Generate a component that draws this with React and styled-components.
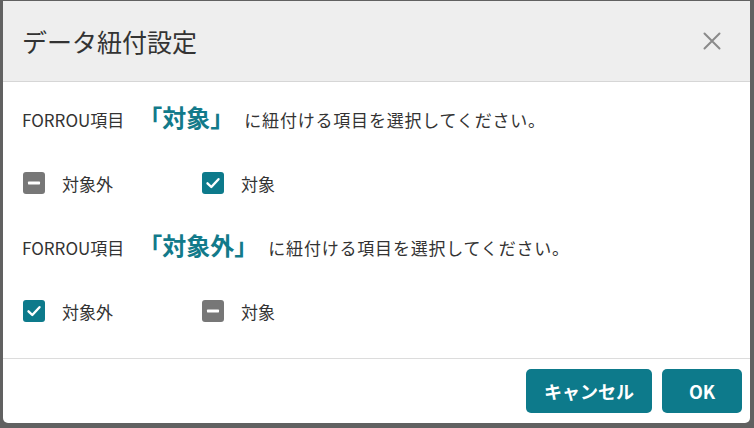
import React from 'react'
import styled, { createGlobalStyle } from 'styled-components'

const GlobalStyle = createGlobalStyle`
  html, body {
    margin: 0;
    padding: 0;
    background: #616161;
  }
  body {
    font-family: "Noto Sans CJK JP", "Noto Sans", sans-serif;
    color: #333;
  }
`

const Backdrop = styled.div`
  width: 754px;
  height: 428px;
  overflow: hidden;
  padding: 1px 0 0 3px;
  box-sizing: border-box;
`

const Dialog = styled.div`
  width: 747px;
  height: 422px;
  background: #fff;
  border-radius: 0 0 5px 5px;
  display: flex;
  flex-direction: column;
  overflow: hidden;
`

const Header = styled.div`
  height: 80px;
  flex-shrink: 0;
  background: #eeeeee;
  border-bottom: 1px solid #d6d6d6;
  display: flex;
  align-items: center;
  justify-content: space-between;
  padding: 0 28px 0 19px;
`

const Title = styled.h2`
  margin: 0;
  font-size: 25px;
  font-weight: 400;
  color: #333;
`

const CloseButton = styled.button`
  border: none;
  background: none;
  padding: 0;
  width: 20px;
  height: 20px;
  display: flex;
  align-items: center;
  justify-content: center;
  cursor: pointer;
`

const Body = styled.div`
  flex: 1;
  padding: 19px 19px 0;
  display: flex;
  flex-direction: column;
  gap: 35px;
`

const Section = styled.div`
  display: flex;
  flex-direction: column;
  gap: 39px;
`

const Prompt = styled.div`
  height: 32px;
  line-height: 32px;
  font-size: 17px;
  color: #333;
  white-space: nowrap;
`

const Target = styled.span`
  font-size: 24px;
  font-weight: 700;
  color: #127a8a;
  margin: 0 10px 0 14px;
`

const Rest = styled.span`
  letter-spacing: 0.8px;
`

const CheckRow = styled.div`
  display: flex;
  align-items: center;
  height: 22px;
`

const CheckItem = styled.label`
  display: flex;
  align-items: center;
  gap: 17px;
  width: 178px;
  font-size: 17px;
  color: #333;
  padding-left: 1px;
`

const Box = styled.span`
  width: 22px;
  height: 22px;
  border-radius: 3px;
  background: ${(p) => (p.$checked ? '#0d7a8b' : '#777777')};
  display: flex;
  align-items: center;
  justify-content: center;
  flex-shrink: 0;
`

const Footer = styled.div`
  height: 64px;
  flex-shrink: 0;
  border-top: 1px solid #dcdcdc;
  display: flex;
  align-items: center;
  justify-content: flex-end;
  gap: 10px;
  padding: 0 8px 0 0;
`

const Button = styled.button`
  height: 44px;
  min-width: 80px;
  padding: 0 18px;
  border: none;
  border-radius: 5px;
  background: #0d7a8b;
  color: #fff;
  font-family: "Noto Sans CJK JP", "Noto Sans", sans-serif;
  font-size: 18px;
  font-weight: 700;
  cursor: pointer;
`

const CheckIcon = ({ checked }) => (
  <Box $checked={checked}>
    {checked ? (
      <svg width="16" height="16" viewBox="0 0 16 16">
        <path d="M2.5 8.3 L6.3 12 L13.5 4.2" fill="none" stroke="#fff" strokeWidth="2.4" strokeLinecap="round" strokeLinejoin="round" />
      </svg>
    ) : (
      <svg width="16" height="16" viewBox="0 0 16 16">
        <rect x="2" y="6.6" width="12" height="2.8" rx="0.6" fill="#fff" />
      </svg>
    )}
  </Box>
)

const sections = [
  { target: '対象', options: [{ label: '対象外', checked: false }, { label: '対象', checked: true }] },
  { target: '対象外', options: [{ label: '対象外', checked: true }, { label: '対象', checked: false }] },
]

export default function App() {
  return (
    <>
      <GlobalStyle />
      <Backdrop>
        <Dialog>
          <Header>
            <Title>データ紐付設定</Title>
            <CloseButton aria-label="閉じる">
              <svg width="18" height="18" viewBox="0 0 18 18">
                <path d="M1.5 1.5 L16.5 16.5 M16.5 1.5 L1.5 16.5" stroke="#8a8a8a" strokeWidth="2" strokeLinecap="round" />
              </svg>
            </CloseButton>
          </Header>
          <Body>
            {sections.map((s) => (
              <Section key={s.target}>
                <Prompt>
                  FORROU項目
                  <Target>「{s.target}」</Target>
                  <Rest>に紐付ける項目を選択してください。</Rest>
                </Prompt>
                <CheckRow>
                  {s.options.map((o) => (
                    <CheckItem key={o.label}>
                      <CheckIcon checked={o.checked} />
                      {o.label}
                    </CheckItem>
                  ))}
                </CheckRow>
              </Section>
            ))}
          </Body>
          <Footer>
            <Button>キャンセル</Button>
            <Button>OK</Button>
          </Footer>
        </Dialog>
      </Backdrop>
    </>
  )
}
